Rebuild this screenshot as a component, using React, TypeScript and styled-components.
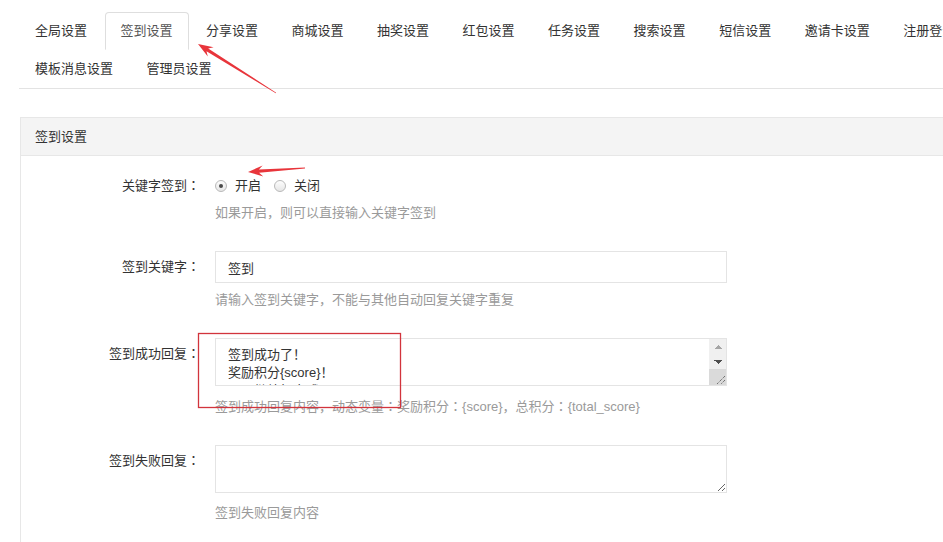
import React from "react";
import styled, { createGlobalStyle } from "styled-components";

const GlobalStyle = createGlobalStyle`
  html, body {
    margin: 0;
    padding: 0;
    background: #fff;
    overflow: hidden;
  }
  body {
    font-family: "Liberation Sans", "Noto Sans CJK SC", sans-serif;
    font-size: 13px;
    color: #333;
  }
`;

const Page = styled.div`
  position: relative;
  width: 1180px;
  height: 542px;
  padding-left: 20px;
  box-sizing: border-box;
  overflow: hidden;
`;

const TabList = styled.ul`
  list-style: none;
  margin: 12px 0 0 -1px;
  padding: 0;
  width: 1060px;
  display: flex;
  flex-wrap: wrap;
  border-bottom: 1px solid #e3e3e3;
`;

const Tab = styled.li<{ $active?: boolean }>`
  height: 38px;
  box-sizing: border-box;
  padding: 0 15px;
  margin-right: 1.5px;
  line-height: 36px;
  white-space: nowrap;
  border: 1px solid ${(p) => (p.$active ? "#dedede" : "transparent")};
  border-bottom-color: transparent;
  border-radius: 4px 4px 0 0;
  background: #fff;
  color: ${(p) => (p.$active ? "#555" : "#333")};
  cursor: pointer;
`;

const Panel = styled.section`
  margin-top: 28px;
  width: 1140px;
  border: 1px solid #e7e7e7;
  background: #fff;
`;

const PanelHeader = styled.div`
  height: 38px;
  box-sizing: border-box;
  line-height: 37px;
  padding-left: 14px;
  background: #f4f4f4;
  border-bottom: 1px solid #e7e7e7;
  color: #333;
`;

const PanelBody = styled.div`
  padding-top: 20px;
`;

const FormRow = styled.div`
  display: grid;
  grid-template-columns: 179px 512px;
  column-gap: 15px;
  margin-bottom: 29px;
`;

const Label = styled.label<{ $top?: number }>`
  text-align: right;
  line-height: 20px;
  padding-top: ${(p) => p.$top ?? 6}px;
  color: #333;
`;

// centred full-width punctuation, as the original font draws it
const Punct = styled.span`
  font-family: "Noto Sans CJK JP", sans-serif;
  line-height: 0;
`;

const Field = styled.div`
  display: flex;
  flex-direction: column;
`;

const RadioGroup = styled.div`
  display: flex;
  align-items: center;
  height: 20px;
`;

const RadioOption = styled.span`
  display: inline-flex;
  align-items: center;
  margin-right: 13px;
  line-height: 20px;
`;

const RadioDot = styled.span<{ $checked?: boolean }>`
  position: relative;
  width: 12px;
  height: 12px;
  margin-right: 8px;
  box-sizing: border-box;
  border-radius: 50%;
  border: 1px solid #b9b9b9;
  background: linear-gradient(#fdfdfd, #e6e6e6);
  &::after {
    content: "";
    display: ${(p) => (p.$checked ? "block" : "none")};
    position: absolute;
    left: 3px;
    top: 3px;
    width: 4px;
    height: 4px;
    border-radius: 50%;
    background: #4a4a4a;
  }
`;

const Help = styled.div<{ $gap?: number }>`
  margin-top: ${(p) => p.$gap ?? 8}px;
  line-height: 18px;
  color: #9a9a9a;
`;

const TextInput = styled.input`
  width: 512px;
  height: 32px;
  box-sizing: border-box;
  padding: 0 12px;
  border: 1px solid #e4e4e4;
  font: inherit;
  color: #333;
  outline: none;
`;

const AreaBox = styled.div`
  position: relative;
  width: 512px;
`;

const TextArea = styled.textarea<{ $scroll?: boolean }>`
  display: block;
  width: 512px;
  height: 48px;
  box-sizing: border-box;
  padding: 7px ${(p) => (p.$scroll ? 30 : 12)}px 6px 12px;
  border: 1px solid #e4e4e4;
  font: inherit;
  line-height: 18px;
  color: #333;
  resize: vertical;
  outline: none;
`;

const ScrollBar = styled.div`
  position: absolute;
  top: 1px;
  right: 1px;
  bottom: 1px;
  width: 17px;
  display: flex;
  flex-direction: column;
  background: #f0f0f0;
  pointer-events: none;
`;

const ScrollArrow = styled.div<{ $dir: "up" | "down" }>`
  height: 15px;
  background-repeat: no-repeat;
  background-size: 8px 4px;
  background-position: center;
  background-image: ${(p) =>
    p.$dir === "up"
      ? "conic-gradient(from 135deg at 50% 0%, #a6a6a6 90deg, transparent 0)"
      : "conic-gradient(from -45deg at 50% 100%, #4f4f4f 90deg, transparent 0)"};
`;

const ScrollCorner = styled.div`
  margin-top: auto;
  height: 16px;
  background: #dadada;
  display: flex;
  align-items: flex-end;
  justify-content: flex-end;
`;

const Overlay = styled.svg`
  position: absolute;
  left: 0;
  top: 0;
  width: 943px;
  height: 542px;
  pointer-events: none;
`;

const tabs = [
  "全局设置",
  "签到设置",
  "分享设置",
  "商城设置",
  "抽奖设置",
  "红包设置",
  "任务设置",
  "搜索设置",
  "短信设置",
  "邀请卡设置",
  "注册登录设置",
  "模板消息设置",
  "管理员设置",
];

const withPunct = (s: string) =>
  s.split(/([，：！])/).map((part, i) =>
    /^[，：！]$/.test(part) ? <Punct key={i}>{part}</Punct> : part
  );

// tapered arrow from tail (tx,ty) to tip (px,py)
function arrowPoints(tx: number, ty: number, px: number, py: number) {
  const dx = px - tx;
  const dy = py - ty;
  const len = Math.hypot(dx, dy);
  const ux = dx / len;
  const uy = dy / len;
  const nx = -uy;
  const ny = ux;
  const L = 15;
  const W = 5.5;
  const bx = px - ux * L;
  const by = py - uy * L;
  const nbx = px - ux * (L - 4);
  const nby = py - uy * (L - 4);
  const s0 = 0.4;
  const s1 = 1.6;
  const pts = [
    [tx + nx * s0, ty + ny * s0],
    [nbx + nx * s1, nby + ny * s1],
    [bx + nx * W, by + ny * W],
    [px, py],
    [bx - nx * W, by - ny * W],
    [nbx - nx * s1, nby - ny * s1],
    [tx - nx * s0, ty - ny * s0],
  ];
  return pts.map((p) => p.map((v) => v.toFixed(1)).join(",")).join(" ");
}

const App: React.FC = () => {
  return (
    <Page>
      <GlobalStyle />
      <TabList>
        {tabs.map((t) => (
          <Tab key={t} $active={t === "签到设置"}>
            {t}
          </Tab>
        ))}
      </TabList>

      <Panel>
        <PanelHeader>签到设置</PanelHeader>
        <PanelBody>
          <FormRow>
            <Label $top={0}>{withPunct("关键字签到：")}</Label>
            <Field>
              <RadioGroup>
                <RadioOption>
                  <RadioDot $checked />
                  开启
                </RadioOption>
                <RadioOption>
                  <RadioDot />
                  关闭
                </RadioOption>
              </RadioGroup>
              <Help>{withPunct("如果开启，则可以直接输入关键字签到")}</Help>
            </Field>
          </FormRow>

          <FormRow>
            <Label>{withPunct("签到关键字：")}</Label>
            <Field>
              <TextInput defaultValue="签到" />
              <Help>{withPunct("请输入签到关键字，不能与其他自动回复关键字重复")}</Help>
            </Field>
          </FormRow>

          <FormRow>
            <Label>{withPunct("签到成功回复：")}</Label>
            <Field>
              <AreaBox>
                <TextArea
                  $scroll
                  defaultValue={"签到成功了！\n奖励积分{score}！\n明天继续打卡哦！！\n总积分{total_score}"}
                />
                <ScrollBar>
                  <ScrollArrow $dir="up" />
                  <ScrollArrow $dir="down" />
                  <ScrollCorner>
                    <svg width="12" height="12" viewBox="0 0 12 12">
                      <path d="M11 3 L3 11 M11 7 L7 11" stroke="#444" strokeWidth="1" strokeDasharray="1 1" />
                    </svg>
                  </ScrollCorner>
                </ScrollBar>
              </AreaBox>
              <Help $gap={12}>
                {withPunct("签到成功回复内容，动态变量：奖励积分：{score}，总积分：{total_score}")}
              </Help>
            </Field>
          </FormRow>

          <FormRow>
            <Label>{withPunct("签到失败回复：")}</Label>
            <Field>
              <TextArea defaultValue="" />
              <Help $gap={11}>签到失败回复内容</Help>
            </Field>
          </FormRow>
        </PanelBody>
      </Panel>

      <Overlay viewBox="0 0 943 542">
        <polygon points={arrowPoints(276, 93, 198, 44)} fill="#e8353b" />
        <polygon points={arrowPoints(305, 168, 248, 172)} fill="#e8353b" />
        <rect x="198.5" y="333.5" width="202" height="74" fill="none" stroke="#d2343c" strokeWidth="1.3" />
      </Overlay>
    </Page>
  );
};

export default App;
